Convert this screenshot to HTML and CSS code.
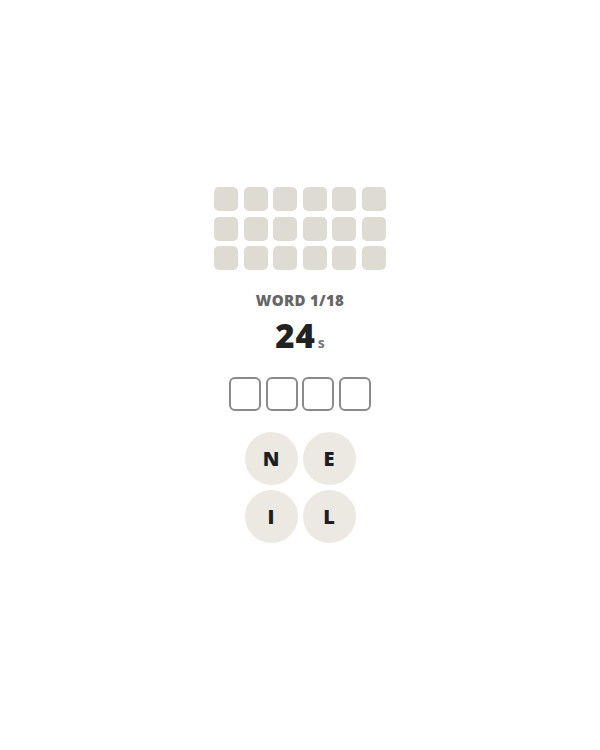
FILE: index.html
```html
<!DOCTYPE html>
<html>
<head>
<meta charset="utf-8">
<link rel="stylesheet" href="styles.css">
</head>
<body>
<main class="game">
  <div class="tiles">
    <div class="tile"></div><div class="tile"></div><div class="tile"></div><div class="tile"></div><div class="tile"></div><div class="tile"></div>
    <div class="tile"></div><div class="tile"></div><div class="tile"></div><div class="tile"></div><div class="tile"></div><div class="tile"></div>
    <div class="tile"></div><div class="tile"></div><div class="tile"></div><div class="tile"></div><div class="tile"></div><div class="tile"></div>
  </div>
  <div class="label">WORD 1/18</div>
  <div class="timer"><span class="num">24</span><span class="unit">s</span></div>
  <div class="slots">
    <div class="slot"></div><div class="slot"></div><div class="slot"></div><div class="slot"></div>
  </div>
  <div class="letters">
    <div class="letter">N</div><div class="letter">E</div>
    <div class="letter">I</div><div class="letter">L</div>
  </div>
</main>
</body>
</html>
```
FILE: styles.css
```css
html, body { margin: 0; padding: 0; background: #fff; }
body { font-family: "Open Sans", "DejaVu Sans", sans-serif; }
.game {
  width: 600px; height: 750px;
  display: flex; flex-direction: column; align-items: center;
  padding-top: 187px; box-sizing: border-box;
}
.tiles {
  display: grid;
  grid-template-columns: repeat(6, 24px);
  grid-auto-rows: 24px;
  gap: 5.6px;
}
.tile { background: #dddbd2; border-radius: 5px; }
.label {
  margin-top: 20px;
  font-size: 15px; font-weight: 800; color: #666;
  letter-spacing: 0.3px; line-height: 20px;
}
.timer {
  margin-top: 8px;
  display: flex; align-items: baseline;
  color: #222; line-height: 36px;
}
.timer .num { font-size: 33px; font-weight: 800; letter-spacing: 1px; }
.timer .unit { font-size: 14px; font-weight: 700; color: #777; margin-left: 2px; }
.slots {
  margin-top: 16px;
  display: flex; gap: 4.5px;
}
.slot {
  width: 28px; height: 30px;
  border: 2px solid #8a8a8a; border-radius: 6px;
}
.letters {
  margin-top: 21px;
  display: grid;
  grid-template-columns: repeat(2, 53px);
  grid-auto-rows: 53px;
  gap: 5px;
}
.letter {
  border-radius: 50%; background: #ebe9e2;
  display: flex; align-items: center; justify-content: center;
  font-size: 20px; font-weight: 800; color: #1e1e1e;
}
```
